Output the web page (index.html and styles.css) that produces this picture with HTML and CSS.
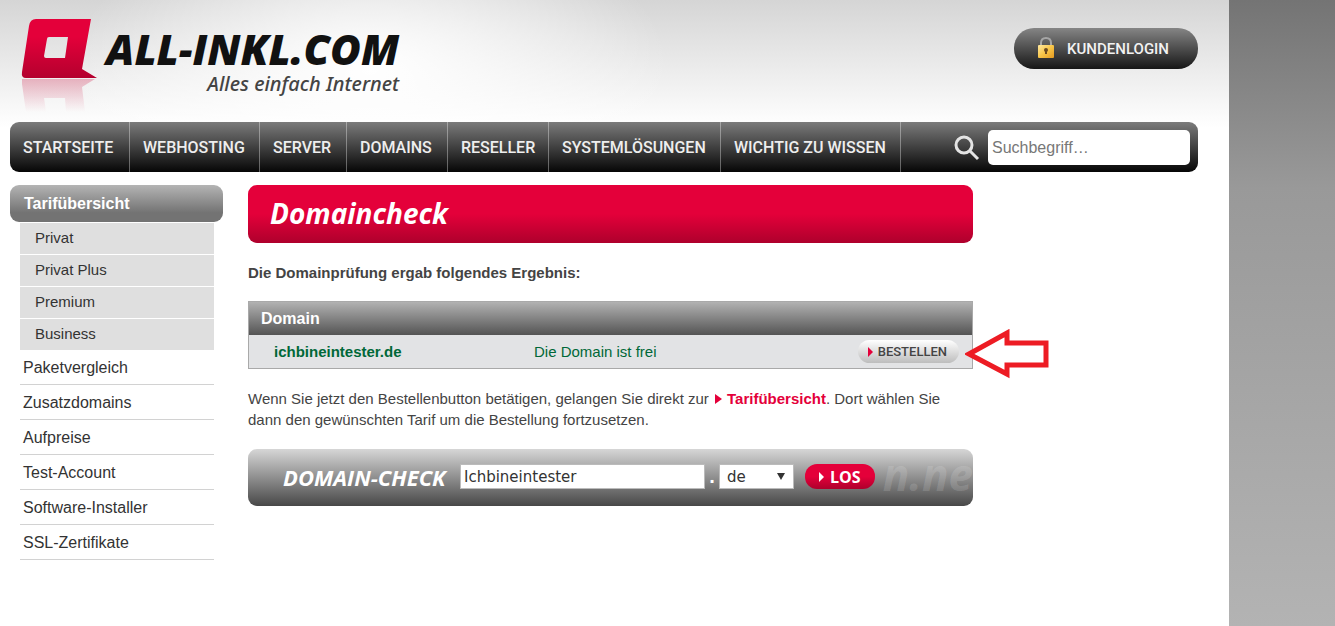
FILE: index.html
```html
<!DOCTYPE html>
<html lang="de">

<head>
    <meta charset="UTF-8">
    <meta name="viewport" content="width=device-width, initial-scale=1.0">
    <title>Domaincheck - ALL-INKL.COM</title>
    <link rel="stylesheet" href="styles.css">
</head>

<body>
    <div class="page">
        <header class="header">
            <a class="logo" href="#">
                <svg class="logo-mark" width="78" height="96" viewBox="0 0 78 96" aria-hidden="true">
                    <defs>
                        <linearGradient id="markRed" x1="0" y1="0" x2="0" y2="1">
                            <stop offset="0.3" stop-color="#e4003a" />
                            <stop offset="1" stop-color="#b4002e" />
                        </linearGradient>
                        <linearGradient id="markMirror" x1="0" y1="0" x2="0" y2="1">
                            <stop offset="0" stop-color="#d0204c" stop-opacity="0.3" />
                            <stop offset="1" stop-color="#d0204c" stop-opacity="0" />
                        </linearGradient>
                    </defs>
                    <path fill="url(#markRed)" fill-rule="evenodd" d="M16 1H71L62 51L77 60H6Q1 60 2 54L9 8Q10 1 16 1ZM29 19Q27 19 27 21L24 38Q24 40 26 40H45L48 19Z" />
                    <path fill="url(#markMirror)" fill-rule="evenodd" d="M2 61H75L62 69L65 94H6L2 66ZM24 80L26 94H46L45 80Z" />
                </svg>
                <span class="logo-text">
                    <strong>ALL-INKL.COM</strong>
                    <em>Alles einfach Internet</em>
                </span>
            </a>
            <a class="login" href="#">
                <svg width="18" height="24" viewBox="0 0 18 24" aria-hidden="true">
                    <defs>
                        <linearGradient id="lockGold" x1="0" y1="0" x2="1" y2="1">
                            <stop offset="0" stop-color="#ffe9a0" />
                            <stop offset="0.5" stop-color="#f8c548" />
                            <stop offset="1" stop-color="#e59a20" />
                        </linearGradient>
                    </defs>
                    <path d="M4 10V7Q4 2 9 2T14 7V10" fill="none" stroke="#a5a5a5" stroke-width="2" />
                    <rect x="1" y="9" width="16" height="13" rx="1" fill="url(#lockGold)" />
                    <circle cx="9" cy="14" r="2" fill="#6b4a20" />
                    <path d="M8 14H10V18H8Z" fill="#6b4a20" />
                </svg>
                KUNDENLOGIN
            </a>
        </header>

        <nav class="mainnav">
            <a href="#">STARTSEITE</a>
            <a href="#">WEBHOSTING</a>
            <a href="#">SERVER</a>
            <a href="#">DOMAINS</a>
            <a href="#">RESELLER</a>
            <a href="#">SYSTEMLÖSUNGEN</a>
            <a href="#">WICHTIG ZU WISSEN</a>
            <form class="search">
                <svg width="26" height="26" viewBox="0 0 26 26" aria-hidden="true">
                    <circle cx="10" cy="10" r="8" fill="none" stroke="#e4e4e4" stroke-width="3" />
                    <path d="M16 16L24 24" stroke="#e4e4e4" stroke-width="3" />
                </svg>
                <input type="search" placeholder="Suchbegriff…" aria-label="Suchbegriff">
            </form>
        </nav>

        <div class="columns">
            <aside class="sidebar">
                <a class="side-title" href="#">Tarifübersicht</a>
                <ul class="side-sub">
                    <li><a href="#">Privat</a></li>
                    <li><a href="#">Privat Plus</a></li>
                    <li><a href="#">Premium</a></li>
                    <li><a href="#">Business</a></li>
                </ul>
                <ul class="side-list">
                    <li><a href="#">Paketvergleich</a></li>
                    <li><a href="#">Zusatzdomains</a></li>
                    <li><a href="#">Aufpreise</a></li>
                    <li><a href="#">Test-Account</a></li>
                    <li><a href="#">Software-Installer</a></li>
                    <li><a href="#">SSL-Zertifikate</a></li>
                </ul>
            </aside>

            <main class="content">
                <h1>Domaincheck</h1>
                <p class="result">Die Domainprüfung ergab folgendes Ergebnis:</p>

                <div class="table-wrap">
                    <table class="domains">
                        <thead>
                            <tr>
                                <th colspan="3">Domain</th>
                            </tr>
                        </thead>
                        <tbody>
                            <tr>
                                <td class="name">ichbineintester.de</td>
                                <td class="status">Die Domain ist frei</td>
                                <td class="action">
                                    <button class="order" type="button"><span class="caret"></span>BESTELLEN</button>
                                </td>
                            </tr>
                        </tbody>
                    </table>
                    <svg class="pointer" width="84" height="50" viewBox="0 0 84 50" aria-hidden="true">
                        <path d="M4 25L42 4V14H81V36H42V45Z" fill="#fff" stroke="#ed1c24" stroke-width="5" />
                    </svg>
                </div>

                <p class="hint">Wenn Sie jetzt den Bestellenbutton betätigen, gelangen Sie direkt zur <a href="#"><span class="caret"></span>Tarifübersicht</a>. Dort wählen Sie dann den gewünschten Tarif um die Bestellung fortzusetzen.</p>

                <form class="check">
                    <label for="domain">DOMAIN-CHECK</label>
                    <input type="text" id="domain" value="Ichbineintester">
                    <span class="dot">.</span>
                    <span class="tld">
                        <select aria-label="Endung">
                            <option>de</option>
                            <option>com</option>
                            <option>net</option>
                        </select>
                    </span>
                    <button class="go" type="submit"><span class="caret"></span>LOS</button>
                    <span class="ghost" aria-hidden="true">n.ne</span>
                </form>
            </main>
        </div>
    </div>
</body>

</html>
```

FILE: styles.css
```css
* {
    box-sizing: border-box;
}

body {
    margin: 0;
    min-height: 100vh;
    background: linear-gradient(#747474, #999 30%, #b3b3b3);
    font-family: "Liberation Sans", Arial, sans-serif;
    font-size: 15px;
    color: #444;
}

a {
    color: inherit;
    text-decoration: none;
}

ul {
    list-style: none;
    margin: 0;
    padding: 0;
}

.page {
    min-height: 100vh;
    margin-right: 106px;
    padding: 0 31px 24px 10px;
    background:
        radial-gradient(ellipse 300px 160px at 370px 70px, #fff, rgba(255, 255, 255, 0)),
        linear-gradient(#d5d5d5, #fff 128px);
}

.header {
    display: flex;
    justify-content: space-between;
    align-items: flex-start;
    height: 122px;
}

.logo {
    display: flex;
    gap: 8px;
    padding: 18px 0 0 10px;
}

.logo-text {
    display: flex;
    flex-direction: column;
    padding-top: 6px;
    font-family: "Open Sans", sans-serif;
}

.logo-text strong {
    font-size: 42px;
    line-height: 50px;
    font-weight: 800;
    font-style: italic;
    color: #111;
}

.logo-text em {
    align-self: flex-end;
    font-family: "Noto Sans", sans-serif;
    font-size: 20px;
    line-height: 20px;
    font-weight: 500;
}

.login {
    display: flex;
    align-items: center;
    gap: 12px;
    height: 41px;
    margin-top: 28px;
    padding: 0 29px 0 23px;
    border-radius: 20px;
    background: linear-gradient(#858585, #161616);
    color: #f2f2f2;
    font-family: Roboto, sans-serif;
    font-size: 15px;
    font-weight: 500;
}

.login svg {
    margin-bottom: 2px;
}

.mainnav {
    display: grid;
    grid-template-columns: 120px 130px 87px 101px 101px 172px 180px 1fr;
    height: 50px;
    overflow: hidden;
    border-radius: 9px;
    background: linear-gradient(#7b7b7b, #060606);
}

.mainnav a {
    padding-left: 13px;
    border-right: 1px solid rgba(255, 255, 255, 0.35);
    color: #eee;
    font-family: Roboto, sans-serif;
    font-size: 16px;
    line-height: 51px;
    font-weight: 500;
    white-space: nowrap;
}

.search {
    display: flex;
    justify-content: flex-end;
    align-items: center;
    gap: 8px;
    padding-right: 8px;
}

.search input {
    width: 202px;
    height: 35px;
    padding: 0 4px;
    border: 0;
    border-radius: 5px;
    background: #fff;
    font: 16px "Liberation Sans", Arial, sans-serif;
}

.search input::placeholder {
    color: #777;
}

.columns {
    display: flex;
    gap: 25px;
    padding-top: 13px;
}

.sidebar {
    flex: 0 0 213px;
    color: #333;
}

.side-title {
    display: block;
    height: 37px;
    padding-left: 14px;
    border-radius: 9px;
    background: linear-gradient(#b4b4b4, #737373 75%);
    color: #fff;
    font-size: 16px;
    line-height: 37px;
    font-weight: bold;
}

.side-sub,
.side-list {
    margin: 0 9px 0 10px;
}

.side-sub li {
    height: 32px;
    padding-left: 15px;
    border-top: 1px solid #fff;
    background: #dfdfdf;
    line-height: 29px;
}

.side-list li {
    height: 35px;
    padding-left: 3px;
    border-bottom: 1px solid #d2d2d2;
    font-size: 16px;
    line-height: 35px;
}

.content {
    flex: 1;
    min-width: 0;
    max-width: 725px;
}

h1 {
    height: 58px;
    margin: 0;
    padding-left: 22px;
    border-radius: 9px;
    background: linear-gradient(#e4003a 50%, #ae002c);
    color: #fff;
    font: italic 700 28px/56px "Open Sans", sans-serif;
}

.result {
    margin: 20px 0 18px;
    line-height: 20px;
    font-weight: bold;
}

.table-wrap {
    position: relative;
}

.domains {
    width: 100%;
    border: 1px solid #a9a9a9;
    border-spacing: 0;
    background: #e2e3e5;
    color: #006838;
}

.domains th {
    height: 33px;
    padding: 0 12px;
    background: linear-gradient(#b2b2b2, #545454);
    color: #fff;
    font-size: 16px;
    text-align: left;
}

.domains td {
    height: 33px;
    padding: 0;
}

.domains .name {
    width: 285px;
    padding-left: 25px;
    font-weight: bold;
}

.domains .action {
    padding-right: 13px;
    text-align: right;
}

.caret {
    display: inline-block;
    border: 5px solid transparent;
    border-left-color: #e4003a;
    border-right-width: 0;
}

.order {
    display: inline-flex;
    align-items: center;
    gap: 5px;
    height: 23px;
    padding: 0 12px 0 10px;
    border: 0;
    border-radius: 12px;
    background: linear-gradient(#fff, #bdbdbd);
    color: #444;
    font: 500 13px Roboto, sans-serif;
}

/* red arrow next to the order button */
.pointer {
    position: absolute;
    top: 28px;
    right: -76px;
}

.hint {
    margin: 19px 0;
    line-height: 21px;
}

.hint a {
    color: #e4003a;
    font-weight: bold;
}

.hint .caret {
    margin: 0 5px 0 2px;
    border-left-width: 7px;
}

.check {
    position: relative;
    display: flex;
    align-items: center;
    height: 57px;
    padding: 0 0 2px 35px;
    border-radius: 9px;
    background: linear-gradient(#d6d6d6, #484848);
}

.check label {
    width: 177px;
    color: #fff;
    font: italic 700 22px "Open Sans", sans-serif;
    white-space: nowrap;
}

.check input,
.check select {
    height: 25px;
    border: 1px solid #bbb;
    border-radius: 0;
    background: #fff;
    color: #333;
    font: 15px "DejaVu Sans", Verdana, sans-serif;
}

.check input {
    width: 245px;
    padding: 0 3px;
}

.dot {
    width: 14px;
    color: #fff;
    font-size: 20px;
    font-weight: bold;
    text-align: center;
}

.tld {
    position: relative;
    margin-right: 11px;
}

.tld select {
    display: block;
    width: 75px;
    padding: 0 7px;
    appearance: none;
}

.tld::after {
    content: "";
    position: absolute;
    top: 9px;
    right: 9px;
    border: 4px solid transparent;
    border-top: 7px solid #333;
    border-bottom: 0;
    pointer-events: none;
}

.go {
    display: flex;
    align-items: center;
    gap: 6px;
    height: 25px;
    padding: 0 14px;
    border: 0;
    border-radius: 12px;
    background: linear-gradient(#e4003a 50%, #ae002c);
    color: #fff;
    font: 700 16px "Open Sans", sans-serif;
}

.go .caret {
    border-left-color: #fff;
}

/* faded lettering behind the form */
.ghost {
    position: absolute;
    top: 0;
    right: 0;
    color: rgba(255, 255, 255, 0.15);
    font: italic 700 44px/50px "Open Sans", sans-serif;
}
```
